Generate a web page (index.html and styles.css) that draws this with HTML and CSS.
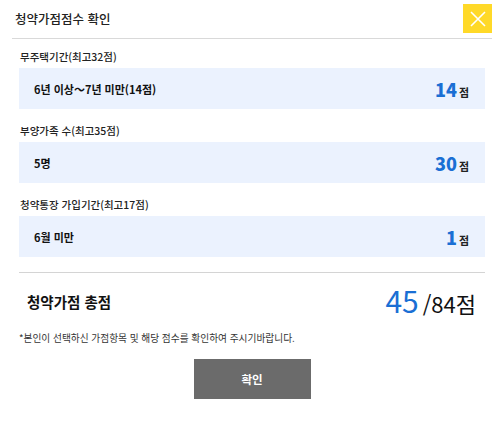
FILE: index.html
```html
<!DOCTYPE html>
<html lang="ko">
<head>
    <meta charset="UTF-8">
    <meta name="viewport" content="width=device-width, initial-scale=1.0">
    <title>청약가점점수 확인</title>
    <link rel="stylesheet" href="styles.css">
</head>
<body>
    <div class="popup">
        <div class="popup-header">
            <h3>청약가점점수 확인</h3>
            <button class="btn-close" aria-label="닫기">
                <svg width="16" height="16" viewBox="0 0 16 16">
                    <path d="M1 1 L15 15 M15 1 L1 15" stroke="#fff" stroke-width="1.6" fill="none"/>
                </svg>
            </button>
        </div>

        <div class="popup-body">
            <div class="score-item">
                <p class="score-label">무주택기간(최고32점)</p>
                <div class="score-box">
                    <span class="score-text">6년 이상～7년 미만(14점)</span>
                    <span class="score-value"><b>14</b>점</span>
                </div>
            </div>

            <div class="score-item">
                <p class="score-label">부양가족 수(최고35점)</p>
                <div class="score-box">
                    <span class="score-text">5명</span>
                    <span class="score-value"><b>30</b>점</span>
                </div>
            </div>

            <div class="score-item">
                <p class="score-label">청약통장 가입기간(최고17점)</p>
                <div class="score-box">
                    <span class="score-text">6월 미만</span>
                    <span class="score-value"><b>1</b>점</span>
                </div>
            </div>

            <div class="total">
                <span class="total-label">청약가점 총점</span>
                <span class="total-value"><b>45</b>/84점</span>
            </div>

            <p class="note">*본인이 선택하신 가점항목 및 해당 점수를 확인하여 주시기바랍니다.</p>

            <div class="btn-area">
                <button class="btn-confirm">확인</button>
            </div>
        </div>
    </div>
</body>
</html>
```

FILE: styles.css
```css
body {
    margin: 0;
    padding: 0;
    background: #fff;
    font-family: "Noto Sans CJK KR", "Noto Sans", sans-serif;
    color: #111;
}
.popup {
    width: 500px;
}
.popup-header {
    display: flex;
    justify-content: space-between;
    align-items: center;
    margin: 0 8px 0 12px;
    padding: 4px 0 5px 3px;
    border-bottom: 1px solid #d9d9d9;
}
.popup-header h3 {
    margin: 0;
    font-size: 12.5px;
    font-weight: 500;
    color: #222;
}
.btn-close {
    width: 29px;
    height: 29px;
    padding: 0;
    border: none;
    background: #ffd928;
    display: flex;
    align-items: center;
    justify-content: center;
    cursor: pointer;
}
.popup-body {
    margin: 0 15px 0 19px;
    padding-top: 10px;
}
.score-item {
    margin-bottom: 14px;
}
.score-label {
    margin: 0 0 3px 1px;
    font-size: 10.5px;
    line-height: 16px;
    font-weight: 500;
    color: #222;
}
.score-box {
    height: 41px;
    background: #ebf2fe;
    display: flex;
    align-items: center;
    justify-content: space-between;
    padding: 0 16px 0 15px;
}
.score-text {
    font-size: 11px;
    font-weight: 700;
    color: #111;
}
.score-value {
    font-size: 11px;
    font-weight: 700;
    color: #222;
}
.score-value b {
    font-size: 18px;
    color: #1a6fd4;
    margin-right: 2px;
}
.total {
    border-top: 1px solid #d4d4d4;
    margin-top: 15px;
    padding: 10px 9px 6px 8px;
    height: 36px;
    display: flex;
    align-items: center;
    justify-content: space-between;
}
.total-label {
    font-size: 14.5px;
    font-weight: 700;
    color: #111;
}
.total-value {
    font-size: 22px;
    line-height: 36px;
    color: #111;
}
.total-value b {
    font-size: 30px;
    font-weight: 400;
    color: #1a6fd4;
    margin-right: 4px;
}
.note {
    margin: 6px 0 14px;
    font-size: 9.7px;
    line-height: 14px;
    color: #333;
}
.btn-area {
    text-align: center;
}
.btn-confirm {
    width: 117px;
    height: 40px;
    border: none;
    background: #6b6b6b;
    color: #fff;
    font-family: inherit;
    font-size: 11.5px;
    font-weight: 700;
    cursor: pointer;
}
```
